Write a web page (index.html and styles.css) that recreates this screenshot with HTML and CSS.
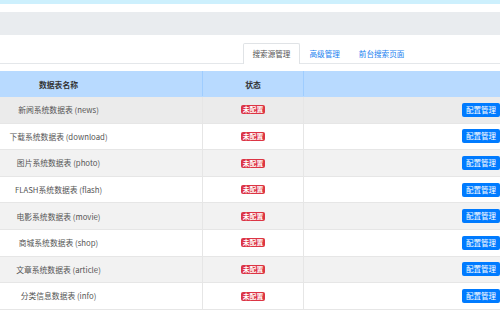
FILE: index.html
```html
<!DOCTYPE html>
<html lang="zh">
<head>
<meta charset="utf-8">
<link rel="stylesheet" href="styles.css">
</head>
<body>
<div class="topline"></div>
<div class="toolbar"></div>
<div class="tabs">
  <span class="tab active">搜索源管理</span>
  <span class="tab">高级管理</span>
  <span class="tab">前台搜索页面</span>
</div>
<div class="viewport">
<table class="grid">
  <colgroup><col class="c1"><col class="c2"><col class="c3"></colgroup>
  <thead>
    <tr><th>数据表名称</th><th>状态</th><th></th></tr>
  </thead>
  <tbody>
    <tr class="hover"><td>新闻系统数据表 (news)</td><td class="st"><span class="badge">未配置</span></td><td class="act"><span class="btn">配置管理</span></td></tr>
    <tr><td>下载系统数据表 (download)</td><td class="st"><span class="badge">未配置</span></td><td class="act"><span class="btn">配置管理</span></td></tr>
    <tr class="odd"><td>图片系统数据表 (photo)</td><td class="st"><span class="badge">未配置</span></td><td class="act"><span class="btn">配置管理</span></td></tr>
    <tr><td>FLASH系统数据表 (flash)</td><td class="st"><span class="badge">未配置</span></td><td class="act"><span class="btn">配置管理</span></td></tr>
    <tr class="odd"><td>电影系统数据表 (movie)</td><td class="st"><span class="badge">未配置</span></td><td class="act"><span class="btn">配置管理</span></td></tr>
    <tr><td>商城系统数据表 (shop)</td><td class="st"><span class="badge">未配置</span></td><td class="act"><span class="btn">配置管理</span></td></tr>
    <tr class="odd"><td>文章系统数据表 (article)</td><td class="st"><span class="badge">未配置</span></td><td class="act"><span class="btn">配置管理</span></td></tr>
    <tr><td>分类信息数据表 (info)</td><td class="st"><span class="badge">未配置</span></td><td class="act"><span class="btn">配置管理</span></td></tr>
  </tbody>
</table>
</div>
</body>
</html>
```
FILE: styles.css
```css
html, body {
  margin: 0;
  padding: 0;
  background: #fff;
  overflow: hidden;
  font-family: "Noto Sans CJK SC", "Noto Sans", sans-serif;
}
.topline {
  height: 4px;
  background: #cdf0fd;
}
.toolbar {
  height: 23px;
  margin-top: 8px;
  background: #e9ecef;
}
.tabs {
  display: flex;
  margin-top: 8px;
  padding-left: 243px;
  border-bottom: 1px solid #e4e7ea;
  height: 20px;
}
.tab {
  padding: 0 8.5px;
  font-size: 7.6px;
  color: #1a82f0;
  border: 1px solid transparent;
  border-bottom: none;
  border-radius: 2px 2px 0 0;
  margin-bottom: -1px;
  height: 20px;
  box-sizing: border-box;
  line-height: 19px;
}
.tab.active {
  color: #555;
  border-color: #e0e3e6;
  background: #fff;
  height: 21px;
}
.viewport {
  margin-top: 7px;
}
.grid {
  margin-left: -86px;
  width: 595px;
  border-collapse: collapse;
  table-layout: fixed;
  font-size: 7.8px;
}
.c1 { width: 288px; }
.c2 { width: 101px; }
.grid th {
  background: #b8daff;
  color: #333;
  font-weight: bold;
  height: 24px;
  padding: 0;
  border-left: 1px solid #9fcdff;
  border-right: 1px solid #9fcdff;
  border-top: 1px solid #b8daff;
  border-bottom: 1px solid #b8daff;
}
.grid td {
  height: 26.6px;
  box-sizing: border-box;
  padding: 0;
  text-align: center;
  color: #555;
  border: 1px solid #e6e6e6;
  border-top: none;
  vertical-align: middle;
}
.grid tr.hover td { background: #ebebeb; }
.grid tr.odd td { background: #f2f2f2; }
.grid td.act {
  text-align: right;
  padding-right: 8px;
}
.badge {
  display: inline-block;
  background: #dc3545;
  color: #fff;
  font-size: 6.8px;
  font-weight: bold;
  line-height: 9px;
  padding: 0 2px;
  border-radius: 2px;
  vertical-align: middle;
  position: relative;
  top: -1px;
}
.btn {
  display: inline-block;
  background: #007bff;
  color: #fff;
  font-size: 7.5px;
  line-height: 14px;
  padding: 0 4px;
  border-radius: 2px;
  vertical-align: middle;
}
```
